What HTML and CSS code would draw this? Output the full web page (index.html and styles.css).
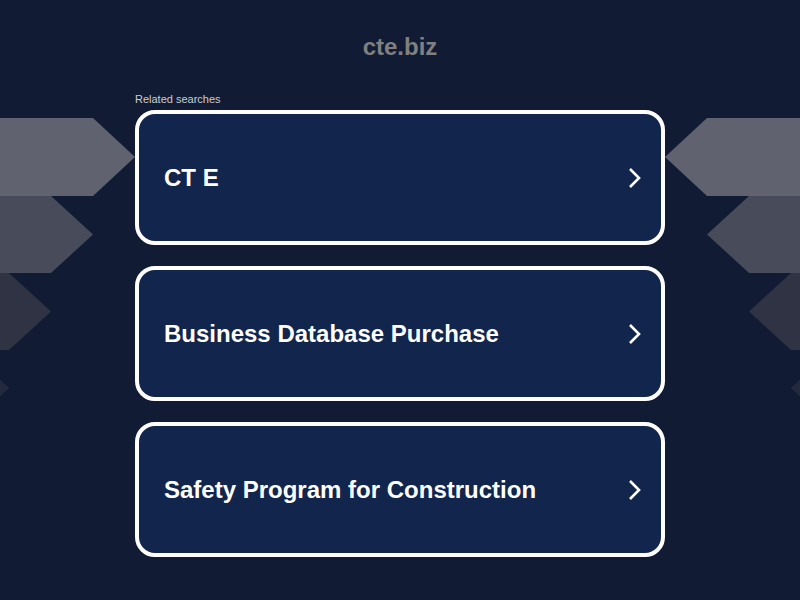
FILE: index.html
```html
<!DOCTYPE html>
<html>
<head>
<meta charset="utf-8">
<link rel="stylesheet" href="styles.css">
</head>
<body>
<svg class="deco" width="800" height="600" viewBox="0 0 800 600" aria-hidden="true">
  <polygon points="0,118 93,118 135,157 93,196 0,196" fill="#60636f"/>
  <polygon points="0,196 51,196 93,234.5 51,273 0,273" fill="#484b5a"/>
  <polygon points="0,273 9,273 51,311.5 9,350 0,350" fill="#2f3344"/>
  <polygon points="0,379.5 9,388 0,396.5" fill="#232a3e"/>
  <polygon points="800,118 707,118 665,157 707,196 800,196" fill="#60636f"/>
  <polygon points="800,196 749,196 707,234.5 749,273 800,273" fill="#484b5a"/>
  <polygon points="800,273 791,273 749,311.5 791,350 800,350" fill="#2f3344"/>
  <polygon points="800,379.5 791,388 800,396.5" fill="#232a3e"/>
</svg>
<main class="page">
  <h1 class="title">cte.biz</h1>
  <section class="related">
    <div class="label">Related searches</div>
    <ul class="list">
      <li><a class="card" href="#"><span class="card-text">CT E</span><svg class="chev" width="14" height="22" viewBox="0 0 14 22"><path d="M2 2 L11 11 L2 20" fill="none" stroke="#fff" stroke-width="2.6"/></svg></a></li>
      <li><a class="card" href="#"><span class="card-text">Business Database Purchase</span><svg class="chev" width="14" height="22" viewBox="0 0 14 22"><path d="M2 2 L11 11 L2 20" fill="none" stroke="#fff" stroke-width="2.6"/></svg></a></li>
      <li><a class="card" href="#"><span class="card-text">Safety Program for Construction</span><svg class="chev" width="14" height="22" viewBox="0 0 14 22"><path d="M2 2 L11 11 L2 20" fill="none" stroke="#fff" stroke-width="2.6"/></svg></a></li>
    </ul>
  </section>
</main>
</body>
</html>
```
FILE: styles.css
```css
html, body {
  margin: 0;
  padding: 0;
  height: 100%;
}
body {
  background: #111c34;
  font-family: "Liberation Sans", Arial, sans-serif;
  position: relative;
  overflow: hidden;
}
.deco {
  position: absolute;
  left: 0;
  top: 0;
  z-index: 0;
}
.page {
  position: relative;
  z-index: 1;
  width: 530px;
  margin: 0 auto;
  padding-top: 32px;
}
.title {
  margin: 0;
  font-size: 24px;
  line-height: 30px;
  font-weight: bold;
  color: #808080;
  text-align: center;
}
.related {
  margin-top: 30px;
}
.label {
  font-size: 11px;
  line-height: 14px;
  color: #c9ccd3;
  margin-bottom: 4px;
}
.list {
  list-style: none;
  margin: 0;
  padding: 0;
  display: flex;
  flex-direction: column;
  gap: 21px;
}
.card {
  box-sizing: border-box;
  height: 135px;
  display: flex;
  align-items: center;
  justify-content: space-between;
  padding: 0 19px 0 25px;
  background: #12254c;
  border: 4px solid #ffffff;
  border-radius: 20px;
  text-decoration: none;
  color: #ffffff;
}
.card-text {
  font-size: 24px;
  font-weight: bold;
  line-height: 28px;
}
.chev {
  display: block;
}
```
